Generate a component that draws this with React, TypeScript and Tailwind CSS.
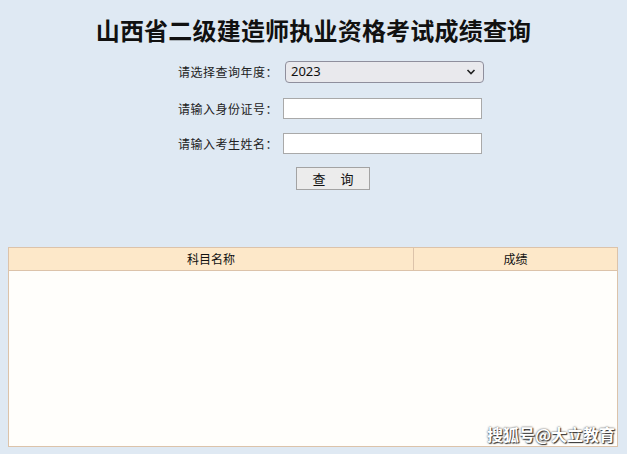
export default function App() {
  const font = { fontFamily: '"Noto Sans CJK SC", "Liberation Sans", sans-serif' };
  return (
    <div className="relative w-[627px] h-[454px] bg-[#dfe9f3] overflow-hidden text-[#222]" style={font}>
      <h1 className="pt-[12px] h-[48px] text-center text-[24px] leading-[36px] font-bold tracking-[0.2px] text-[#111]">
        山西省二级建造师执业资格考试成绩查询
      </h1>
      <div className="flex flex-col mt-[13px]">
        <div className="flex items-center h-[22px]">
          <div className="w-[280px] text-right text-[12px] pr-[2px] tracking-[0.5px]">请选择查询年度：</div>
          <div className="ml-[5px] w-[199px] h-[22px] rounded-[4px] border border-[#8f8f9d] bg-[#e9e9ed] flex items-center justify-between px-[5px]">
            <span className="text-[13px] text-[#111]" style={{ fontFamily: '"Noto Sans", sans-serif' }}>2023</span>
            <svg width="10" height="8" viewBox="0 0 10 8" className="mr-[2px]">
              <path d="M1.5 2 L5 5.5 L8.5 2" fill="none" stroke="#222" strokeWidth="1.6" />
            </svg>
          </div>
        </div>
        <div className="flex items-center h-[21px] mt-[15px]">
          <div className="w-[280px] text-right text-[12px] pr-[2px] tracking-[0.5px]">请输入身份证号：</div>
          <div className="ml-[3px] w-[199px] h-[21px] border border-[#a9a9a9] bg-white"></div>
        </div>
        <div className="flex items-center h-[21px] mt-[14px]">
          <div className="w-[280px] text-right text-[12px] pr-[2px] tracking-[0.5px]">请输入考生姓名：</div>
          <div className="ml-[3px] w-[199px] h-[21px] border border-[#a9a9a9] bg-white"></div>
        </div>
        <div className="flex mt-[13px]">
          <div className="ml-[296px] w-[74px] h-[23px] border border-[#a3a3a3] bg-[#ececec] flex items-center justify-center text-[13px] text-[#111] tracking-[6px] pl-[6px]">
            查 询
          </div>
        </div>
      </div>
      <div className="mx-[8px] mt-[57px] w-[610px] h-[200px] border border-[#dcc3aa] bg-[#fffefb] flex flex-col">
        <div className="flex h-[23px] bg-[#fde8c9] border-b border-[#dcc3aa] text-[12px] text-[#111]">
          <div className="w-[405px] border-r border-[#dcc3aa] flex items-center justify-center">科目名称</div>
          <div className="flex-1 flex items-center justify-center">成绩</div>
        </div>
        <div className="flex-1"></div>
      </div>
      <div
        className="absolute right-[12px] bottom-[8px] text-[16px] text-white font-bold"
        style={{ textShadow: '0 0 2px #333, 1px 1px 1px #333' }}
      >
        搜狐号@大立教育
      </div>
    </div>
  );
}
